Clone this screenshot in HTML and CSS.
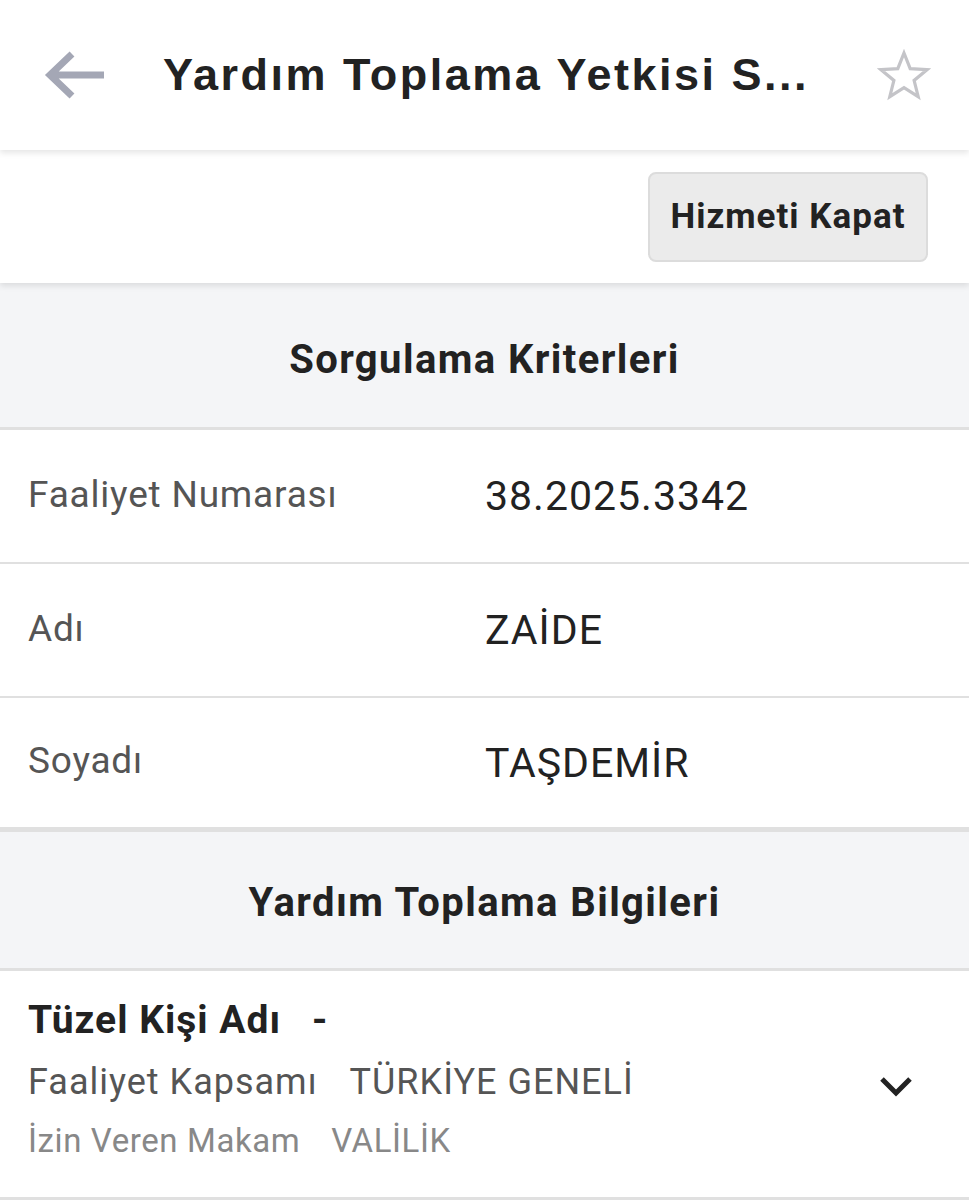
FILE: index.html
```html
<!DOCTYPE html>
<html lang="tr">
<head>
    <meta charset="UTF-8">
    <meta name="viewport" content="width=device-width, initial-scale=1.0">
    <title>Yardım Toplama Yetkisi Sorgulama</title>
    <link rel="stylesheet" href="styles.css">
</head>
<body>

<header class="topbar">
    <button class="icon-btn back" aria-label="Geri">
        <svg width="62" height="52" viewBox="0 0 62 52">
            <path d="M60 26H8M28 5L6 26l22 21" fill="none" stroke="#a4a7b5" stroke-width="7" stroke-linejoin="miter"/>
        </svg>
    </button>
    <h1 class="page-title">Yardım Toplama Yetkisi S...</h1>
    <button class="icon-btn star" aria-label="Favori">
        <svg width="54" height="52" viewBox="0 0 54 52">
            <path d="M27 4l6.2 15.6 16.8 1.1-12.9 10.7 4.1 16.3L27 38.7 12.8 47.7l4.1-16.3L4 20.7l16.8-1.1z" fill="none" stroke="#c4c4c8" stroke-width="3.2" stroke-linejoin="miter"/>
        </svg>
    </button>
</header>

<div class="actions">
    <button class="btn-close">Hizmeti Kapat</button>
</div>

<section>
    <h2 class="section-title">Sorgulama Kriterleri</h2>
    <div class="row">
        <span class="row-label">Faaliyet Numarası</span>
        <span class="row-value">38.2025.3342</span>
    </div>
    <div class="row">
        <span class="row-label">Adı</span>
        <span class="row-value">ZAİDE</span>
    </div>
    <div class="row last">
        <span class="row-label">Soyadı</span>
        <span class="row-value">TAŞDEMİR</span>
    </div>
</section>

<section>
    <h2 class="section-title compact">Yardım Toplama Bilgileri</h2>
    <div class="detail">
        <div class="detail-text">
            <div class="detail-main">Tüzel Kişi Adı <span class="dash">-</span></div>
            <div class="detail-sub">Faaliyet Kapsamı <span class="gap">TÜRKİYE GENELİ</span></div>
            <div class="detail-note">İzin Veren Makam <span class="gap">VALİLİK</span></div>
        </div>
        <svg class="chevron" width="34" height="22" viewBox="0 0 34 22">
            <path d="M3 4l14 14L31 4" fill="none" stroke="#222" stroke-width="5"/>
        </svg>
    </div>
</section>

</body>
</html>
```

FILE: styles.css
```css
body {
    margin: 0;
    padding: 0;
    background-color: #fff;
    font-family: Roboto, "Noto Sans", sans-serif;
    color: #222;
}
button {
    font-family: inherit;
}
.topbar {
    height: 150px;
    display: flex;
    align-items: center;
    background-color: #fff;
    box-shadow: 0 3px 6px rgba(0, 0, 0, 0.1);
    position: relative;
    z-index: 2;
}
.icon-btn {
    background: none;
    border: 0;
    padding: 0;
    display: flex;
}
.back {
    margin-left: 44px;
}
.page-title {
    margin: 0 0 0 57px;
    flex: 1;
    font-family: "Liberation Sans", Arial, sans-serif;
    font-size: 45px;
    font-weight: bold;
    letter-spacing: 2.5px;
    color: #222;
    white-space: nowrap;
}
.star {
    margin-right: 38px;
}
.actions {
    height: 133px;
    display: flex;
    align-items: center;
    justify-content: flex-end;
    padding-right: 41px;
    box-shadow: 0 3px 6px rgba(0, 0, 0, 0.1);
    position: relative;
    z-index: 1;
}
.btn-close {
    width: 280px;
    height: 90px;
    background-color: #ebebeb;
    border: 2px solid #dcdcdc;
    border-radius: 8px;
    font-size: 35px;
    font-weight: bold;
    letter-spacing: 1px;
    color: #222;
}
.section-title {
    margin: 0;
    height: 147px;
    display: flex;
    align-items: center;
    justify-content: center;
    padding-top: 8px;
    background-color: #f4f5f7;
    border-bottom: 3px solid #e0e0e0;
    box-sizing: border-box;
    font-size: 40px;
    font-weight: bold;
    letter-spacing: 1.4px;
    color: #222;
}
.section-title.compact {
    height: 139px;
    padding-top: 4px;
}
.row {
    height: 134px;
    display: grid;
    grid-template-columns: 457px 1fr;
    align-items: center;
    padding-left: 28px;
    border-bottom: 2px solid #e0e0e0;
    box-sizing: border-box;
}
.row.last {
    border-bottom: 5px solid #e0e0e0;
}
.row-label {
    font-size: 37px;
    letter-spacing: 0.8px;
    color: #555;
    margin-top: -4px;
}
.row-value {
    font-size: 41px;
    letter-spacing: 1px;
    color: #222;
}
.detail {
    height: 229px;
    display: flex;
    align-items: center;
    padding: 0 56px 0 28px;
    border-bottom: 3px solid #e0e0e0;
    box-sizing: border-box;
}
.detail-text {
    flex: 1;
    display: flex;
    flex-direction: column;
    gap: 18px;
    margin-top: -12px;
}
.detail-main {
    font-size: 39px;
    font-weight: bold;
    letter-spacing: 1px;
    color: #222;
}
.dash {
    margin-left: 20px;
}
.detail-sub {
    font-size: 36px;
    letter-spacing: 1px;
    color: #555;
}
.detail-note {
    font-size: 33px;
    letter-spacing: 0.6px;
    color: #888;
}
.gap {
    margin-left: 22px;
}
.chevron {
    margin-top: 4px;
}
```
